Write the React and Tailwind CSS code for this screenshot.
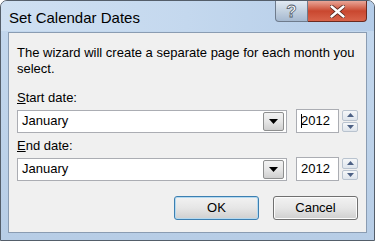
import React from 'react';

const font = { fontFamily: '"Liberation Sans", Arial, sans-serif' };

const DropArrow = () => (
  <div className="w-[21px] h-[19px] border border-[#8e8f8f] rounded-[2px] bg-gradient-to-b from-[#f3f3f3] via-[#e6e6e6] to-[#cfcfcf] flex items-center justify-center">
    <svg width="9" height="5" viewBox="0 0 9 5">
      <path d="M0 0h9L4.5 5z" fill="#000" />
    </svg>
  </div>
);

const Spinner = () => (
  <div className="flex flex-col w-[16px] h-[22px] gap-px">
    <div className="flex-1 border border-[#b9c3cf] rounded-[2px] bg-gradient-to-b from-[#f5f7f9] to-[#dfe5ec] flex items-center justify-center">
      <svg width="7" height="4" viewBox="0 0 7 4">
        <path d="M3.5 0L7 4H0z" fill="#4d6185" />
      </svg>
    </div>
    <div className="flex-1 border border-[#b9c3cf] rounded-[2px] bg-gradient-to-b from-[#f5f7f9] to-[#dfe5ec] flex items-center justify-center">
      <svg width="7" height="4" viewBox="0 0 7 4">
        <path d="M0 0h7L3.5 4z" fill="#4d6185" />
      </svg>
    </div>
  </div>
);

const DateRow = ({ focused }) => (
  <div className="flex items-center">
    <div className="w-[270px] h-[23px] bg-white border border-[#abadb3] flex items-center justify-between pl-[4px] pr-[2px]">
      <span className="text-[13px] text-black">January</span>
      <DropArrow />
    </div>
    <div className="ml-[9px] w-[43px] h-[24px] bg-white border border-[#abadb3] flex items-center pl-[4px]">
      {focused && <span className="w-px h-[14px] bg-black -mr-px"></span>}
      <span className="text-[13px] text-black">2012</span>
    </div>
    <div className="ml-[3px]">
      <Spinner />
    </div>
  </div>
);

const App = () => {
  return (
    <div
      className="w-[375px] h-[241px] bg-gradient-to-b from-[#c4d8ee] via-[#bed3ea] to-[#b7cde6] border border-[#545e6a] rounded-t-[7px] flex flex-col overflow-hidden"
      style={font}
    >
      {/* title bar */}
      <div className="h-[30px] flex items-start justify-between bg-gradient-to-r from-[#cfe0f2] via-[#c4d8ee] to-[#b4cce8]">
        <span className="text-[15px] text-black pl-[8px] pt-[8px] leading-[18px]">Set Calendar Dates</span>
        <div className="flex mr-[7px]">
          <div className="w-[33px] h-[21px] border border-[#6e7b8c] border-t-0 rounded-bl-[4px] bg-gradient-to-b from-[#e2eaf3] via-[#c3d1e0] to-[#a6b9d0] flex items-center justify-center">
            <span className="text-[17px] font-bold text-white leading-none" style={{ WebkitTextStroke: '0.8px #4f5b6a' }}>?</span>
          </div>
          <div className="w-[59px] h-[21px] border border-[#6b2a20] border-t-0 border-l-0 rounded-br-[4px] bg-gradient-to-b from-[#e8a597] via-[#c9472f] to-[#d8634a] flex items-center justify-center">
            <svg width="15" height="13" viewBox="0 0 15 13">
              <path d="M1.5 1.5l12 10M13.5 1.5l-12 10" stroke="#5a2a22" strokeWidth="4.2" strokeLinecap="round" />
              <path d="M1.5 1.5l12 10M13.5 1.5l-12 10" stroke="#fff" strokeWidth="2.4" strokeLinecap="round" />
            </svg>
          </div>
        </div>
      </div>

      {/* client area */}
      <div className="mx-[7px] mt-px h-[201px] border border-[#8a9cb2] bg-[#f0f0f0] px-[8px] text-black">
        <p className="text-[13px] leading-[16px] mt-[12px]">
          The wizard will create a separate page for each month you select.
        </p>
        <p className="text-[13px] leading-[16px] mt-[13px]">
          <span className="underline">S</span>tart date:
        </p>
        <div className="mt-[3px]">
          <DateRow focused />
        </div>
        <p className="text-[13px] leading-[16px] mt-[5px]">
          <span className="underline">E</span>nd date:
        </p>
        <div className="mt-[3px]">
          <DateRow />
        </div>
        <div className="flex justify-end gap-[14px] mt-[15px]">
          <button className="w-[85px] h-[24px] rounded-[3px] border border-[#3c7fb1] bg-gradient-to-b from-[#f2f2f2] via-[#e6e6e6] to-[#cfcfcf] text-[13px] text-black shadow-[inset_0_0_0_1px_#b4d9f0]">
            OK
          </button>
          <button className="w-[85px] h-[24px] rounded-[3px] border border-[#707070] bg-gradient-to-b from-[#f2f2f2] via-[#e6e6e6] to-[#cfcfcf] text-[13px] text-black shadow-[inset_0_0_0_1px_#fcfcfc]">
            Cancel
          </button>
        </div>
      </div>
    </div>
  );
};

export default App;
